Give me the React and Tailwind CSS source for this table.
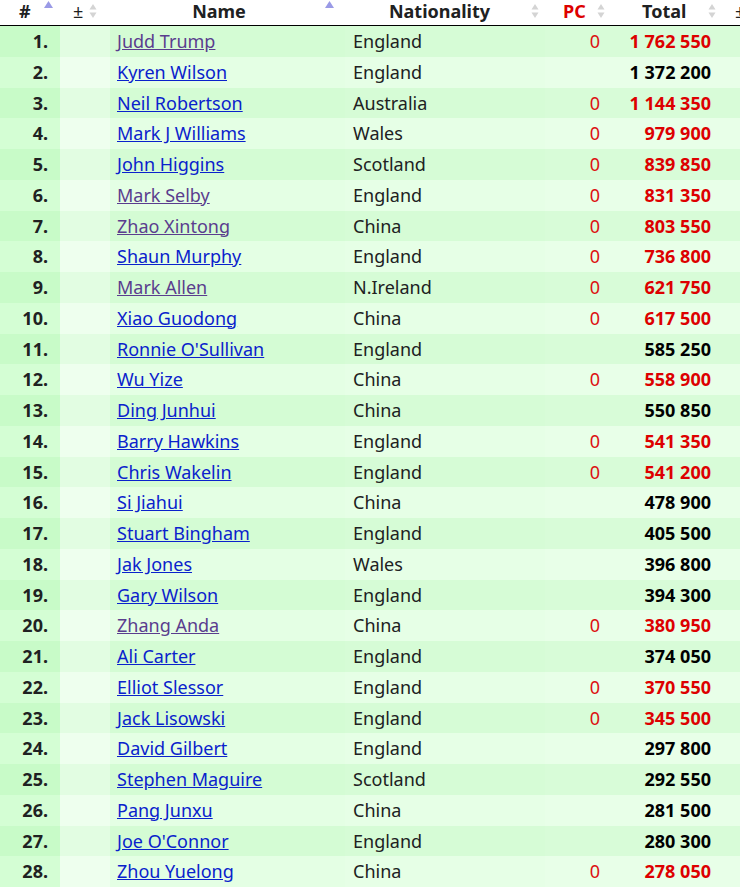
import React from 'react';

const rows = [
  ['Judd Trump', 'England', true, '1 762 550', true],
  ['Kyren Wilson', 'England', false, '1 372 200', false],
  ['Neil Robertson', 'Australia', true, '1 144 350', false],
  ['Mark J Williams', 'Wales', true, '979 900', false],
  ['John Higgins', 'Scotland', true, '839 850', false],
  ['Mark Selby', 'England', true, '831 350', true],
  ['Zhao Xintong', 'China', true, '803 550', true],
  ['Shaun Murphy', 'England', true, '736 800', false],
  ['Mark Allen', 'N.Ireland', true, '621 750', true],
  ['Xiao Guodong', 'China', true, '617 500', false],
  ["Ronnie O'Sullivan", 'England', false, '585 250', false],
  ['Wu Yize', 'China', true, '558 900', false],
  ['Ding Junhui', 'China', false, '550 850', false],
  ['Barry Hawkins', 'England', true, '541 350', false],
  ['Chris Wakelin', 'England', true, '541 200', false],
  ['Si Jiahui', 'China', false, '478 900', false],
  ['Stuart Bingham', 'England', false, '405 500', false],
  ['Jak Jones', 'Wales', false, '396 800', false],
  ['Gary Wilson', 'England', false, '394 300', false],
  ['Zhang Anda', 'China', true, '380 950', true],
  ['Ali Carter', 'England', false, '374 050', false],
  ['Elliot Slessor', 'England', true, '370 550', false],
  ['Jack Lisowski', 'England', true, '345 500', false],
  ['David Gilbert', 'England', false, '297 800', false],
  ['Stephen Maguire', 'Scotland', false, '292 550', false],
  ['Pang Junxu', 'China', false, '281 500', false],
  ["Joe O'Connor", 'England', false, '280 300', false],
  ['Zhou Yuelong', 'China', true, '278 050', false],
];

const cols = 'grid grid-cols-[60px_50px_235px_200px_67px_110px_18px]';

// sort indicator: ascending (blue up) or unsorted (grey up/down)
const Sort = ({ up }) =>
  up ? (
    <svg width="9" height="8" viewBox="0 0 9 8" className="block">
      <path d="M4.5 0 L9 7 L0 7 Z" fill="#9a9ae6" />
    </svg>
  ) : (
    <svg width="8" height="16" viewBox="0 0 8 16" className="block">
      <path d="M4 1 L7.5 6.5 L0.5 6.5 Z" fill="#d4d4d4" />
      <path d="M4 15 L7.5 9.5 L0.5 9.5 Z" fill="#d4d4d4" />
    </svg>
  );

export default function App() {
  return (
    <div className="w-[740px] h-[890px] overflow-hidden bg-white text-[18px] text-[#202122]" style={{ fontFamily: '"Noto Sans", "Open Sans", sans-serif' }}>
      <div className={`${cols} h-[26px] border-b border-black font-bold leading-[22px]`}>
        <div className="relative pl-[19px]">
          <span>#</span>
          <span className="absolute left-[44px] top-[1px]"><Sort up /></span>
        </div>
        <div className="relative pl-[13px] font-normal">
          <span>±</span>
          <span className="absolute left-[29px] top-[3px]"><Sort /></span>
        </div>
        <div className="relative flex justify-center pr-[17px]">
          <span>Name</span>
          <span className="absolute right-[11px] top-[1px]"><Sort up /></span>
        </div>
        <div className="relative flex justify-center pr-[11px]">
          <span>Nationality</span>
          <span className="absolute right-[6px] top-[3px]"><Sort /></span>
        </div>
        <div className="relative pl-[18px] text-[#dd0000]">
          <span>PC</span>
          <span className="absolute right-[7px] top-[3px]"><Sort /></span>
        </div>
        <div className="relative pl-[30px]">
          <span>Total</span>
          <span className="absolute right-[6px] top-[3px]"><Sort /></span>
        </div>
        <div className="font-normal pl-[13px]">±</div>
      </div>
      {rows.map(([name, nat, pc, total, visited], i) => {
        const odd = i % 2 === 0;
        return (
          <div key={name} className={`${cols} h-[30.75px] items-center leading-[30px]`}>
            <div className={`h-full text-right pr-3 font-bold ${odd ? 'bg-[#c8fbc8]' : 'bg-[#d4fed4]'}`}>{i + 1}.</div>
            <div className={`h-full ${odd ? 'bg-[#e2fde2]' : 'bg-[#eeffee]'}`}></div>
            <div className={`h-full pl-[7px] ${odd ? 'bg-[#d4fcd4]' : 'bg-[#e4ffe4]'}`}>
              <a href="#" className={`underline ${visited ? 'text-[#5a3d8e]' : 'text-[#0a22cc]'}`}>{name}</a>
            </div>
            <div className={`h-full pl-2 ${odd ? 'bg-[#d6fcd6]' : 'bg-[#e6ffe6]'}`}>{nat}</div>
            <div className={`h-full text-right pr-[12px] text-[#dd1111] ${odd ? 'bg-[#d8fcd8]' : 'bg-[#e8ffe8]'}`}>{pc ? '0' : ''}</div>
            <div className={`h-full text-right pr-[11px] font-bold ${pc ? 'text-[#dd0000]' : 'text-black'} ${odd ? 'bg-[#d8fcd8]' : 'bg-[#e8ffe8]'}`}>{total}</div>
            <div className={`h-full ${odd ? 'bg-[#d8fcd8]' : 'bg-[#e8ffe8]'}`}></div>
          </div>
        );
      })}
    </div>
  );
}
